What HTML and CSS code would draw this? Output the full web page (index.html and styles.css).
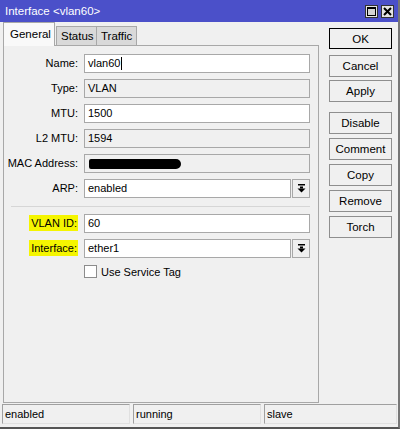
FILE: index.html
```html
<!DOCTYPE html>
<html>
<head>
<meta charset="utf-8">
<link rel="stylesheet" href="styles.css">
</head>
<body>
<div class="win">
  <div class="titlebar">
    <span class="title">Interface &lt;vlan60&gt;</span>
    <div class="tbtns">
      <span class="tb"><svg width="11" height="11" viewBox="0 0 11 11"><rect x="1.5" y="1.5" width="8" height="8" fill="none" stroke="#000" stroke-width="1"/><rect x="1" y="1" width="9" height="2" fill="#000"/><rect x="2" y="3" width="7" height="6" fill="#d4d4d4"/></svg></span>
      <span class="tb"><svg width="11" height="11" viewBox="0 0 11 11"><path d="M2 2 L9 9 M9 2 L2 9" stroke="#000" stroke-width="2"/></svg></span>
    </div>
  </div>
  <div class="body">
    <div class="main">
      <div class="tabs">
        <div class="tab active">General</div>
        <div class="tab">Status</div>
        <div class="tab">Traffic</div>
      </div>
      <div class="panel">
        <div class="form">
          <label class="lbl">Name:</label>
          <div class="field edit">vlan60<span class="caret"></span></div>
          <label class="lbl">Type:</label>
          <div class="field ro">VLAN</div>
          <label class="lbl">MTU:</label>
          <div class="field edit">1500</div>
          <label class="lbl">L2 MTU:</label>
          <div class="field ro">1594</div>
          <label class="lbl">MAC Address:</label>
          <div class="field ro"><span class="redact"></span></div>
          <label class="lbl">ARP:</label>
          <div class="combo"><div class="field edit">enabled</div><span class="ddbtn"><svg width="9" height="9" viewBox="0 0 9 9"><rect x="1" y="0" width="7" height="1.5" fill="#000"/><rect x="3" y="2.5" width="3" height="2" fill="#000"/><polygon points="0.5,4.5 8.5,4.5 4.5,8.5" fill="#000"/></svg></span></div>
        </div>
        <div class="sep"></div>
        <div class="form">
          <label class="lbl"><span class="hl">VLAN ID:</span></label>
          <div class="field edit">60</div>
          <label class="lbl"><span class="hl">Interface:</span></label>
          <div class="combo"><div class="field edit">ether1</div><span class="ddbtn"><svg width="9" height="9" viewBox="0 0 9 9"><rect x="1" y="0" width="7" height="1.5" fill="#000"/><rect x="3" y="2.5" width="3" height="2" fill="#000"/><polygon points="0.5,4.5 8.5,4.5 4.5,8.5" fill="#000"/></svg></span></div>
          <span></span>
          <div class="check"><span class="box"></span>Use Service Tag</div>
        </div>
      </div>
    </div>
    <div class="buttons">
      <div class="btn default">OK</div>
      <div class="btn cancel">Cancel</div>
      <div class="btn apply">Apply</div>
      <div class="btn">Disable</div>
      <div class="btn">Comment</div>
      <div class="btn">Copy</div>
      <div class="btn">Remove</div>
      <div class="btn">Torch</div>
    </div>
  </div>
  <div class="status">
    <div class="cell c1">enabled</div>
    <div class="cell c2">running</div>
    <div class="cell c3">slave</div>
  </div>
</div>
</body>
</html>
```
FILE: styles.css
```css
html, body {
  margin: 0;
  padding: 0;
  background: #f0f0f0;
}
.win {
  width: 400px;
  height: 429px;
  background: #f0f0f0;
  display: flex;
  flex-direction: column;
  font-family: "Liberation Sans", Arial, sans-serif;
  font-size: 11px;
  color: #000;
  box-sizing: border-box;
  border-right: 2px solid #777;
  border-bottom: 2px solid #555;
  overflow: hidden;
}
.titlebar {
  height: 22px;
  flex: none;
  background: #4b50c9;
  display: flex;
  align-items: center;
  justify-content: space-between;
  padding-left: 5px;
  padding-right: 4px;
}
.title {
  color: #fff;
  font-size: 11.5px;
}
.tbtns {
  display: flex;
  gap: 3px;
}
.tb {
  width: 13px;
  height: 13px;
  box-sizing: border-box;
  border: 1px solid #333;
  background: #e4e4e4;
  display: flex;
  align-items: center;
  justify-content: center;
}
.tb svg { display: block; }
.body {
  flex: none;
  height: 381px;
  display: flex;
}
.main {
  margin-left: 3px;
  width: 316px;
  display: flex;
  flex-direction: column;
}
.tabs {
  height: 24px;
  display: flex;
  align-items: flex-end;
  margin-bottom: -1px;
  position: relative;
  z-index: 1;
}
.tab {
  height: 19px;
  box-sizing: border-box;
  padding: 3px 0 0 4px;
  width: 41px;
  border: 1px solid #a8a8a8;
  border-bottom: none;
  background: #d9d9d9;
  margin-left: -1px;
  margin-bottom: 1px;
  font-size: 11.5px;
}
.tab.active {
  height: 24px;
  margin-left: 0;
  margin-bottom: 0;
  background: #f9f9f9;
  padding: 5px 0 0 6px;
  width: 52px;
  font-size: 11.5px;
}
.tab.active + .tab { margin-left: 1px; }
.panel {
  flex: 1;
  border: 1px solid #a8a8a8;
  background: #f0f0f0;
  padding-top: 8px;
}
.form {
  display: grid;
  grid-template-columns: 74px 226px;
  column-gap: 6px;
  row-gap: 6px;
}
.lbl {
  text-align: right;
  line-height: 19px;
  height: 19px;
  white-space: nowrap;
}
.hl {
  background: #f5f500;
  padding: 2px 1px 2px 2px;
}
.field {
  height: 19px;
  box-sizing: border-box;
  border: 1px solid #a8a8a8;
  padding: 0 3px;
  line-height: 17px;
  white-space: nowrap;
  display: flex;
  align-items: center;
}
.field.edit { background: #fff; }
.field.ro { background: #f0f0f0; }
.caret {
  display: inline-block;
  width: 1px;
  height: 13px;
  background: #000;
  margin-left: 1px;
}
.redact {
  display: inline-block;
  width: 92px;
  height: 10px;
  background: #000;
  border-radius: 2px 5px 5px 2px;
  margin-left: 1px;
}
.combo {
  display: flex;
  gap: 1px;
}
.combo .field { flex: 1; }
.ddbtn {
  width: 18px;
  height: 19px;
  box-sizing: border-box;
  border: 1px solid #a8a8a8;
  background: #f0f0f0;
  display: flex;
  align-items: center;
  justify-content: center;
}
.ddbtn svg { display: block; }
.sep {
  height: 1px;
  background: #d6d6d6;
  margin: 8px 8px 7px 7px;
}
.check {
  display: flex;
  align-items: center;
  height: 13px;
  margin-top: 1px;
}
.box {
  width: 13px;
  height: 13px;
  box-sizing: border-box;
  border: 1px solid #8c8c8c;
  background: #fff;
  margin-right: 4px;
}
.buttons {
  margin-left: 10px;
  width: 63px;
  padding-top: 6px;
  display: flex;
  flex-direction: column;
  gap: 4px;
}
.btn {
  height: 22px;
  box-sizing: border-box;
  border: 1px solid #8e8e8e;
  background: #f0f0f0;
  display: flex;
  align-items: center;
  justify-content: center;
  font-size: 11.5px;
}
.btn.default { border-color: #000; height: 21px; }
.btn.cancel { margin-top: 2px; margin-bottom: -1px; }
.btn.apply { margin-bottom: 6px; }
.status {
  flex: none;
  display: flex;
  gap: 3px;
  padding: 1px 0 0 2px;
}
.cell {
  height: 20px;
  box-sizing: border-box;
  border: 1px solid #a0a0a0;
  border-right-color: #e0e0e0;
  border-bottom-color: #e0e0e0;
  padding: 0 2px;
  line-height: 18px;
}
.c1 { width: 128px; }
.c2 { width: 128px; }
.c3 { width: 133px; }
```
